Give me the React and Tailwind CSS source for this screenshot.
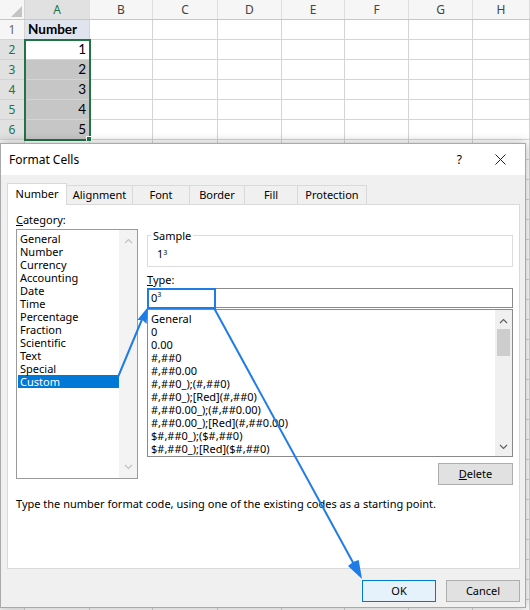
import React from 'react';

// spreadsheet columns, widths include the right gridline
const columns = [
  { name: 'A', cls: 'w-[65px]' },
  { name: 'B', cls: 'w-[63px]' },
  { name: 'C', cls: 'w-[65px]' },
  { name: 'D', cls: 'w-[64px]' },
  { name: 'E', cls: 'w-[63px]' },
  { name: 'F', cls: 'w-[64px]' },
  { name: 'G', cls: 'w-[64px]' },
  { name: 'H', cls: 'flex-1' },
];

const rows = Array.from({ length: 30 }, (_, i) => i + 1);

const categories = [
  'General', 'Number', 'Currency', 'Accounting', 'Date', 'Time',
  'Percentage', 'Fraction', 'Scientific', 'Text', 'Special', 'Custom',
];

const formats = [
  'General',
  '0',
  '0.00',
  '#,##0',
  '#,##0.00',
  '#,##0_);(#,##0)',
  '#,##0_);[Red](#,##0)',
  '#,##0.00_);(#,##0.00)',
  '#,##0.00_);[Red](#,##0.00)',
  '$#,##0_);($#,##0)',
  '$#,##0_);[Red]($#,##0)',
];

const tabs = [
  { name: 'Number', cls: 'w-[60px]' },
  { name: 'Alignment', cls: 'w-[66px]' },
  { name: 'Font', cls: 'w-[57px]' },
  { name: 'Border', cls: 'w-[55px]' },
  { name: 'Fill', cls: 'w-[53px]' },
  { name: 'Protection', cls: 'w-[69px]' },
];

const Chevron = ({ up, color }) => (
  <svg width="9" height="6" viewBox="0 0 9 6">
    <polyline
      points={up ? '1,5 4.5,1.5 8,5' : '1,1 4.5,4.5 8,1'}
      fill="none"
      stroke={color}
      strokeWidth="1.2"
    />
  </svg>
);

const SheetRow = ({ n }) => {
  const selected = n >= 2 && n <= 6;
  let cellA = null;
  if (n === 1) cellA = <span className="pl-[3px] font-bold">Number</span>;
  if (selected) cellA = <span className="ml-auto pr-[3px]">{n - 1}</span>;

  return (
    <div className="flex h-[20px] border-b border-[#d4d4d4]">
      <div
        className={`w-[25px] shrink-0 border-r border-[#d4d4d4] flex items-center justify-center text-[12px] font-['Noto_Sans',sans-serif] ${
          selected ? 'bg-[#e1e1e1] text-[#217346]' : 'bg-[#f6f6f6] text-[#666]'
        }`}
      >
        {/* rows below 6 sit under the dialog */}
        {n <= 6 ? n : null}
      </div>
      {columns.map((c) => (
        <div
          key={c.name}
          className={`${c.cls} shrink-0 border-r border-[#d4d4d4] flex items-center text-[13.5px] font-['Lato',sans-serif] text-black ${
            c.name === 'A' && n === 1 ? 'bg-[#dfe4ee]' : ''
          } ${c.name === 'A' && n >= 3 && n <= 6 ? 'bg-[#c6c6c6]' : ''}`}
        >
          {c.name === 'A' ? cellA : null}
        </div>
      ))}
    </div>
  );
};

const Sheet = () => (
  <div className="absolute inset-0 bg-white overflow-hidden">
    {/* column headers */}
    <div className="flex h-[20px] border-b border-[#c6c6c6] bg-[#f6f6f6] text-[12px] font-['Noto_Sans',sans-serif]">
      <div className="w-[25px] shrink-0 border-r border-[#d4d4d4] relative">
        <svg className="absolute right-[2px] bottom-[2px]" width="11" height="11" viewBox="0 0 11 11">
          <polygon points="11,0 11,11 0,11" fill="#c4c4c4" />
        </svg>
      </div>
      {columns.map((c) => (
        <div
          key={c.name}
          className={`${c.cls} shrink-0 border-r border-[#dedede] flex items-center justify-center ${
            c.name === 'A' ? 'bg-[#e1e1e1] text-[#217346]' : 'text-[#444]'
          }`}
        >
          {c.name}
        </div>
      ))}
    </div>
    {rows.map((n) => (
      <SheetRow key={n} n={n} />
    ))}
    {/* selection A2:A6 */}
    <div className="absolute left-[24px] top-[39px] w-[67px] h-[102px] border-2 border-[#217346]" />
    <div className="absolute left-[86px] top-[136px] w-[6px] h-[6px] bg-[#217346] border border-white" />
  </div>
);

const Dialog = () => (
  <div className="absolute left-0 top-[143px] w-[526px] h-[465px] flex flex-col bg-[#f0f0f0] border border-[#a9a9a9] shadow-[0_0_10px_rgba(0,0,0,0.3)] font-['Noto_Sans',sans-serif] text-[11px] text-black">
    {/* title bar */}
    <div className="h-[31px] shrink-0 bg-white flex items-center pl-[8px]">
      <span className="text-[12px]">Format Cells</span>
      <span className="ml-auto mr-[33px] text-[12px]">?</span>
      <svg className="mr-[19px]" width="11" height="11" viewBox="0 0 11 11">
        <path d="M0.5 0.5L10.5 10.5M10.5 0.5L0.5 10.5" stroke="#222" strokeWidth="1" />
      </svg>
    </div>

    <div className="pl-[6px] pr-[5px] pt-[8px]">
      {/* tabs */}
      <div className="flex items-end h-[21px]">
        {tabs.map((t, i) =>
          i === 0 ? (
            <div
              key={t.name}
              className={`${t.cls} h-[22px] -mb-px relative z-10 bg-white border border-b-0 border-[#d9d9d9] flex items-center justify-center`}
            >
              {t.name}
            </div>
          ) : (
            <div
              key={t.name}
              className={`${t.cls} h-[19px] border-t border-r border-[#d9d9d9] flex items-center justify-center`}
            >
              {t.name}
            </div>
          )
        )}
      </div>

      {/* tab panel */}
      <div className="w-[513px] h-[365px] bg-white border border-[#d9d9d9] pl-[8px] pt-[8px]">
        <div className="flex">
          {/* category */}
          <div className="w-[122px]">
            <div className="leading-[13px]">
              <span className="underline">C</span>ategory:
            </div>
            <div className="mt-[3px] h-[250px] border border-[#9a9a9a] flex">
              <div className="flex-1 pt-[2px] pl-[1px]">
                {categories.map((c) => (
                  <div
                    key={c}
                    className={`h-[13px] leading-[13px] pl-[2px] ${
                      c === 'Custom' ? 'bg-[#0078d7] text-white' : ''
                    }`}
                  >
                    {c}
                  </div>
                ))}
              </div>
              <div className="w-[18px] bg-[#f3f3f3] flex flex-col items-center justify-between py-[8px]">
                <Chevron up color="#c2c2c2" />
                <Chevron color="#c2c2c2" />
              </div>
            </div>
          </div>

          {/* sample, type, list */}
          <div className="ml-[9px] w-[366px] flex flex-col">
            <fieldset className="mt-[16px] h-[38px] border border-[#dcdcdc] px-[8px]">
              <legend className="px-[2px] -ml-[5px] leading-[13px]">Sample</legend>
              <div className="leading-[13px] mt-[5px] pl-[1px]">
                1<sup className="text-[7px] -top-[3px]">3</sup>
              </div>
            </fieldset>
            <div className="mt-[6px] leading-[13px]">
              <span className="underline">T</span>ype:
            </div>
            <div className="mt-[2px] h-[20px] border border-[#8a8a8a] flex items-center pl-[3px]">
              0<sup className="text-[7px] -top-[3px]">3</sup>
            </div>
            <div className="mt-px h-[148px] border border-[#8a8a8a] flex">
              <div className="flex-1 pt-[2px] pl-[3px]">
                {formats.map((f) => (
                  <div key={f} className="h-[13px] leading-[13px] whitespace-nowrap">
                    {f}
                  </div>
                ))}
              </div>
              <div className="w-[17px] bg-[#f0f0f0] flex flex-col items-center pt-[8px] pb-[6px]">
                <Chevron up color="#606060" />
                <div className="mt-[5px] w-[13px] h-[27px] bg-[#cdcdcd]" />
                <div className="mt-auto">
                  <Chevron color="#606060" />
                </div>
              </div>
            </div>
            <button className="mt-[6px] self-end w-[75px] h-[22px] border border-[#adadad] bg-[#e1e1e1] text-[11px]">
              <span className="underline">D</span>elete
            </button>
          </div>
        </div>
        <p className="mt-[12px] leading-[13px]">
          Type the number format code, using one of the existing codes as a starting point.
        </p>
      </div>

      {/* buttons */}
      <div className="mt-[11px] flex justify-end gap-[10px]">
        <button className="w-[74px] h-[22px] border border-[#0078d7] bg-[#e5f1fb] text-[11px]">OK</button>
        <button className="w-[74px] h-[22px] border border-[#adadad] bg-[#e1e1e1] text-[11px]">Cancel</button>
      </div>
    </div>
  </div>
);

// blue annotation: box around the type code and two arrows
const Annotations = () => (
  <svg className="absolute inset-0 pointer-events-none" width="530" height="610" viewBox="0 0 530 610">
    <rect x="148" y="289" width="67" height="19" fill="none" stroke="#1f7be6" strokeWidth="2" />
    <line x1="118" y1="377" x2="143" y2="317" stroke="#1f7be6" strokeWidth="2" />
    <path d="M148 307 L146.5 324 L142.5 320 L137.3 320 Z" fill="#1f7be6" />
    <line x1="214" y1="308" x2="356" y2="568" stroke="#1f7be6" strokeWidth="2" />
    <path d="M362 579 L348 566 L353 562 L358.7 560 Z" fill="#1f7be6" />
  </svg>
);

const App = () => {
  return (
    <div className="relative w-[530px] h-[610px] overflow-hidden bg-white">
      <Sheet />
      <Dialog />
      <Annotations />
    </div>
  );
};

export default App;
